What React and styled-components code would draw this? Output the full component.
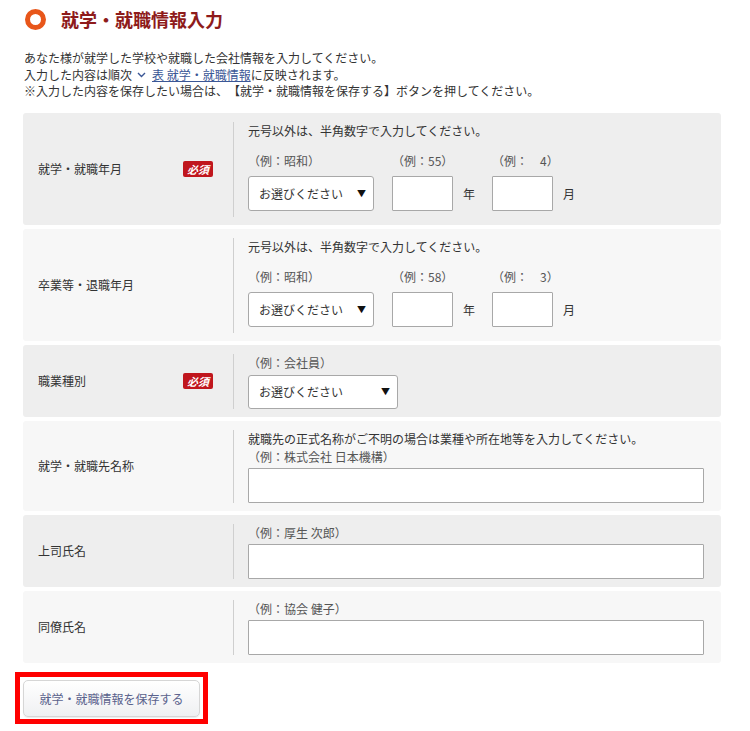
import React from 'react';
import styled, { createGlobalStyle } from 'styled-components';

const GlobalStyle = createGlobalStyle`
  body {
    margin: 0;
    background: #fff;
    color: #333;
    font-family: "Noto Sans CJK JP", "Liberation Sans", sans-serif;
  }
`;

const colors = {
  gray: '#eeeeee',
  light: '#f7f7f7',
  title: '#8e1b1b',
  ring: '#e8561a',
  badge: '#c0161d',
  link: '#3b5796',
  border: '#a8a8a8',
};

const Wrapper = styled.section`
  width: 698px;
  padding: 8px 0 20px 23px;
`;

const Title = styled.h1`
  display: flex;
  align-items: center;
  gap: 15px;
  margin: 0 0 0 2px;
  font-size: 18px;
  line-height: 22px;
  font-weight: 700;
  color: ${colors.title};
`;

const Ring = styled.span`
  flex: none;
  width: 21px;
  height: 21px;
  box-sizing: border-box;
  border: 5.5px solid ${colors.ring};
  border-radius: 50%;
`;

const Intro = styled.div`
  margin: 20px 0 0 1px;
  font-size: 12px;
  line-height: 16.5px;
`;

const Link = styled.a`
  color: ${colors.link};
  text-decoration: underline;
  margin-left: 6px;
`;

const Chevron = styled.svg`
  width: 9px;
  height: 6px;
  margin-left: 5px;
  vertical-align: 2px;
`;

const Rows = styled.div`
  display: flex;
  flex-direction: column;
  gap: 4px;
  margin-top: 13px;
`;

const Row = styled.div`
  display: grid;
  grid-template-columns: 210px 1fr;
  background: ${({ $shade }) => ($shade ? colors.gray : colors.light)};
  border-radius: 3px;
`;

const LabelCell = styled.div`
  display: flex;
  align-items: center;
  justify-content: space-between;
  padding: 0 20px 0 15px;
  font-size: 12px;
`;

const Badge = styled.span`
  background: ${colors.badge};
  color: #fff;
  font-size: 11px;
  font-weight: 700;
  font-style: italic;
  line-height: 16px;
  padding: 0 4px;
  border-radius: 2px;
`;

const Content = styled.div`
  margin: 9px 0 8px;
  padding: 0 0 ${({ $pb }) => $pb || 0}px 14px;
  border-left: 1px solid #cfcfcf;
`;

const Hint = styled.div`
  font-size: 12px;
  line-height: 18px;
`;

const Example = styled.div`
  font-size: 12px;
  line-height: 18px;
  color: #555;
  margin-bottom: ${({ $gap }) => $gap ?? 2}px;
`;

const DateFields = styled.div`
  display: flex;
  margin-top: 12px;
`;

const FieldCol = styled.div`
  display: flex;
  flex-direction: column;
  margin-right: ${({ $mr }) => $mr || 0}px;
`;

const ControlLine = styled.div`
  display: flex;
  align-items: center;
`;

const Select = styled.div`
  display: flex;
  align-items: center;
  justify-content: space-between;
  width: ${({ $w }) => $w}px;
  height: ${({ $h }) => $h || 35}px;
  box-sizing: border-box;
  padding: 0 7px 0 10px;
  background: #fff;
  border: 1px solid ${colors.border};
  border-radius: 3px;
  font-size: 12px;
  color: #333;
`;

const Arrow = styled.span`
  font-size: 9px;
  color: #111;
`;

const Input = styled.input`
  width: ${({ $w }) => $w}px;
  height: 35px;
  box-sizing: border-box;
  margin: 0;
  border: 1px solid ${colors.border};
  border-radius: 1px;
  background: #fff;
  font-family: inherit;
`;

const Unit = styled.span`
  font-size: 12px;
  margin: 0 17px 0 10px;
`;

const SaveFrame = styled.div`
  display: flex;
  width: fit-content;
  margin: 9px 0 0 -8px;
  padding: 3px 3px 2px;
  border: 5px solid #ff0000;
`;

const SaveButton = styled.button`
  width: 177px;
  height: 37px;
  border: 1px solid #d6d6d6;
  border-radius: 5px;
  background: linear-gradient(#ffffff, #eff0f2);
  box-shadow: 0 1px 1px rgba(0, 0, 0, 0.08);
  font-family: inherit;
  font-size: 12px;
  color: #5a628c;
  padding: 0;
`;

const dateRows = [
  { label: '就学・就職年月', required: true, era: '（例：昭和）', year: '（例：55）', month: '（例：　4）' },
  { label: '卒業等・退職年月', required: false, era: '（例：昭和）', year: '（例：58）', month: '（例：　3）' },
];

const textRows = [
  { label: '就学・就職先名称', hint: '就職先の正式名称がご不明の場合は業種や所在地等を入力してください。', example: '（例：株式会社 日本機構）' },
  { label: '上司氏名', example: '（例：厚生 次郎）' },
  { label: '同僚氏名', example: '（例：協会 健子）' },
];

const App = () => (
  <Wrapper>
    <GlobalStyle />
    <Title>
      <Ring />
      就学・就職情報入力
    </Title>
    <Intro>
      あなた様が就学した学校や就職した会社情報を入力してください。
      <br />
      入力した内容は順次
      <Chevron viewBox="0 0 9 6">
        <path d="M1 1l3.5 3.5L8 1" fill="none" stroke={colors.link} strokeWidth="1.4" />
      </Chevron>
      <Link>表 就学・就職情報</Link>に反映されます。
      <br />
      ※入力した内容を保存したい場合は、　【就学・就職情報を保存する】ボタンを押してください。
    </Intro>
    <Rows>
      {dateRows.map((row, i) => (
        <Row key={row.label} $shade={i % 2 === 0}>
          <LabelCell>
            {row.label}
            {row.required && <Badge>必須</Badge>}
          </LabelCell>
          <Content $pb={6}>
            <Hint>元号以外は、半角数字で入力してください。</Hint>
            <DateFields>
              <FieldCol $mr={18}>
                <Example $gap={6}>{row.era}</Example>
                <Select $w={126}>
                  お選びください<Arrow>▼</Arrow>
                </Select>
              </FieldCol>
              <FieldCol>
                <Example $gap={6}>{row.year}</Example>
                <ControlLine>
                  <Input $w={61} />
                  <Unit>年</Unit>
                </ControlLine>
              </FieldCol>
              <FieldCol>
                <Example $gap={6}>{row.month}</Example>
                <ControlLine>
                  <Input $w={61} />
                  <Unit>月</Unit>
                </ControlLine>
              </FieldCol>
            </DateFields>
          </Content>
        </Row>
      ))}
      <Row $shade>
        <LabelCell>
          職業種別
          <Badge>必須</Badge>
        </LabelCell>
        <Content>
          <Example $gap={3}>（例：会社員）</Example>
          <Select $w={150} $h={34}>
            お選びください<Arrow>▼</Arrow>
          </Select>
        </Content>
      </Row>
      {textRows.map((row, i) => (
        <Row key={row.label} $shade={i % 2 === 1}>
          <LabelCell>{row.label}</LabelCell>
          <Content>
            {row.hint && <Hint>{row.hint}</Hint>}
            <Example>{row.example}</Example>
            <Input $w={456} />
          </Content>
        </Row>
      ))}
    </Rows>
    <SaveFrame>
      <SaveButton type="submit">就学・就職情報を保存する</SaveButton>
    </SaveFrame>
  </Wrapper>
);

export default App;
